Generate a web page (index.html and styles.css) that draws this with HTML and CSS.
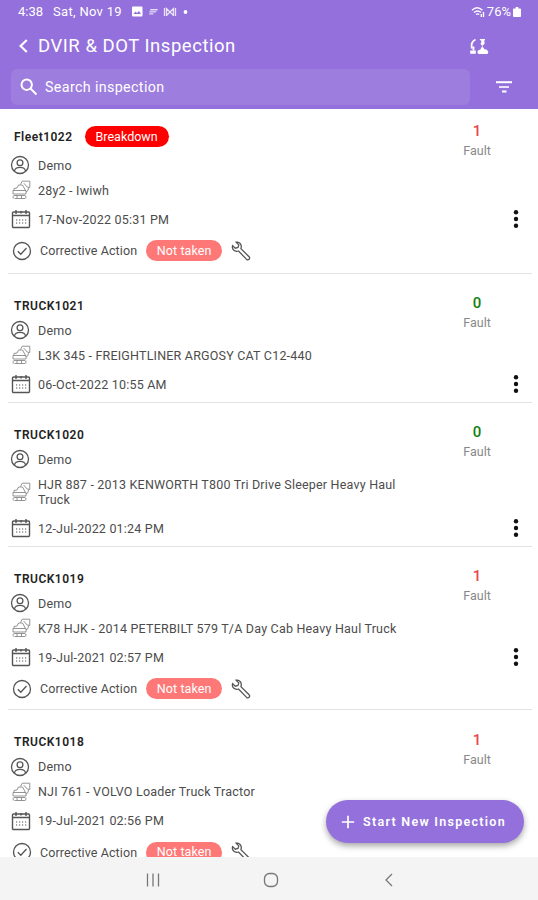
FILE: index.html
```html
<!DOCTYPE html>
<html lang="en">
  <head>
    <meta charset="UTF-8" />
    <meta name="viewport" content="width=device-width, initial-scale=1.0" />
    <title>DVIR &amp; DOT Inspection</title>
    <link rel="stylesheet" href="styles.css">
  </head>
  <body>
    <svg class="sprite" aria-hidden="true">
      <symbol id="user" viewBox="0 0 20 20">
        <circle cx="10" cy="10" r="8.500" />
        <circle cx="10" cy="7.800" r="2.900" />
        <path d="M4.500 15.800c.5-2.400 2.500-3.400 5.500-3.400s5 1 5.500 3.400" />
      </symbol>
      <symbol id="vehicle" viewBox="0 0 20 20">
        <path d="M9.500 4.500l1.700-3.300h7.600v6.300l-2.600-.5-3.400-3.800" />
        <path d="M3 10.500V8.500l3-.5 1.500-3h4l3 5.500M2 10.500h13v3.500H2zM17.500 7.500l-.5 3-2 1.500" />
        <path d="M3 15.500h11M3.500 18.500h10.500M2.200 15.500v3M14.800 15.500v3M6 15.500v3M10.500 15.500v3" />
      </symbol>
      <symbol id="calendar" viewBox="0 0 20 20">
        <rect x="1.500" y="3" width="17" height="15.500" rx="1" />
        <path d="M1.500 6.500h17M5 1v4M15 1v4M10 2v2.500" />
        <path stroke-width="1.200" d="M5 11h1.200M8 11h1.200M11 11h1.200M14 11h1.200M5 14h1.200M8 14h1.200M11 14h1.200M14 14h1.200" />
      </symbol>
      <symbol id="check" viewBox="0 0 20 20">
        <circle cx="10" cy="10" r="8.500" />
        <path d="M5.800 10.200l3 3 5.700-6.200" />
      </symbol>
      <symbol id="wrench" viewBox="0 0 20 20">
        <path d="M5.200 1.200l2.600 2.700-.8 2.600-2.700.7-2.700-2.600C.8 7 2.200 9.600 4.800 10.200c1 .3 2 .1 2.700-.2l8.300 8.600c1.600 1 3.700-.9 2.500-2.600L9.900 7.600C11.300 3.500 8.400.4 5.200 1.200z" />
      </symbol>
    </svg>

    <header class="app-header">
      <div class="status-bar">
        <span class="clock">4:38</span>
        <span class="date">Sat, Nov 19</span>
        <svg class="status-icons" viewBox="0 0 60 14">
          <path fill-rule="evenodd" d="M2 1.500h8.500q1 0 1 1v8q0 1-1 1H2q-1 0-1-1v-8q0-1 1-1zM2.500 9h7.500L8 6 6 8 4.500 6.500z" />
          <path d="M19.500 4h7.500l-.7 1.400h-7.500zM18.500 6.200h7l-.7 1.300h-6.500zM18.300 8.300h4v1.300h-4z" opacity=".75" />
          <path d="M33.500 3v8M35.500 11V3.500l3.500 3.500 3.500-3.500V11M35.500 10.500L39 7l3.500 3.500M44.500 3v8" fill="none" stroke="#fff" stroke-width="1.300" opacity=".8" />
          <circle cx="54.500" cy="7" r="1.900" />
        </svg>
        <span class="battery">
          <svg class="wifi" viewBox="0 0 14 12">
            <path d="M1 4.200q5-4.800 10.500 0M3 6.500q3.500-3 7 0M5 8.500q1.700-1.200 3.200 0M12.500 6v5M10.300 8v3" fill="none" stroke="#fff" stroke-width="1.400" />
          </svg>
          <span>76%</span>
          <svg class="cell" viewBox="0 0 9 11">
            <path d="M3 0h3v1.500h2q1 0 1 1V10q0 1-1 1H1q-1 0-1-1V2.500q0-1 1-1h2z" />
          </svg>
        </span>
      </div>
      <div class="title-bar">
        <svg class="back" viewBox="0 0 9 14"><path d="M7.800 1L1.600 7l6.200 6" /></svg>
        <h1>DVIR &amp; DOT Inspection</h1>
        <svg class="sync" viewBox="0 0 20 17">
          <path d="M6.500 1.500Q1.500 4 2.800 10.500M4.500 8.500v4" fill="none" stroke="#fff" stroke-width="1.800" />
          <path d="M1.200 12.500h5.600v3.300H1.200zM10.500 1h5.500v1.600h-1l.8 3-2.600 2.400L11.500 6l1-2.500zM9.500 16q-1.800-1-.8-3 1-1.500 2.500-1.300L13.200 8l2.300 3.300q2.800-.2 3.600 2.200.7 1.500-.8 2.500z" />
        </svg>
      </div>
      <div class="search-bar">
        <div class="search">
          <svg viewBox="0 0 18 18"><circle cx="6.700" cy="6.700" r="5.200" /><path d="M10.500 10.500l6 6" /></svg>
          <span>Search inspection</span>
        </div>
        <svg class="filter" viewBox="0 0 16 12">
          <path d="M0 1.200h16" /><path d="M3 6h10" opacity=".8" /><path d="M6 10.500h4.500" />
        </svg>
      </div>
    </header>

    <main class="list" id="inspection-list"></main>

    <button class="start">
      <svg viewBox="0 0 14 14"><path d="M7 .8v12.400M.8 7h12.400" /></svg>
      <span>Start New Inspection</span>
    </button>

    <nav class="nav-bar">
      <svg viewBox="0 0 16 16"><path d="M2.500 1.500v13M8 1.500v13M13.500 1.500v13" /></svg>
      <svg viewBox="0 0 16 16"><rect x="1.500" y="1.500" width="13" height="13" rx="5" /></svg>
      <svg viewBox="0 0 16 16"><path d="M11 2L5 8l6 6" /></svg>
    </nav>

    <script>
      const inspections = [
        {
          name: "Fleet1022",
          breakdown: true,
          vehicle: "28y2 - Iwiwh",
          date: "17-Nov-2022 05:31 PM",
          faults: 1,
        },
        {
          name: "TRUCK1021",
          vehicle: "L3K 345 - FREIGHTLINER ARGOSY CAT C12-440",
          date: "06-Oct-2022 10:55 AM",
          faults: 0,
        },
        {
          name: "TRUCK1020",
          vehicle: "HJR 887 - 2013 KENWORTH T800 Tri Drive Sleeper Heavy Haul Truck",
          date: "12-Jul-2022 01:24 PM",
          faults: 0,
        },
        {
          name: "TRUCK1019",
          vehicle: "K78 HJK - 2014 PETERBILT 579 T/A Day Cab Heavy Haul Truck",
          date: "19-Jul-2021 02:57 PM",
          faults: 1,
        },
        {
          name: "TRUCK1018",
          vehicle: "NJI 761 - VOLVO Loader Truck Tractor",
          date: "19-Jul-2021 02:56 PM",
          faults: 1,
        },
      ];

      function icon(name) {
        return `<svg class="icon ${name}"><use href="#${name}" /></svg>`;
      }

      function populateList() {
        const list = document.getElementById("inspection-list");
        inspections.forEach((item) => {
          const action = item.faults
            ? `<div class="row action">
                ${icon("check")}<span class="label">Corrective Action</span>
                <span class="badge pending">Not taken</span>${icon("wrench")}
              </div>`
            : "";
          list.innerHTML += `
            <article class="item ${item.breakdown ? "broken" : ""}">
              <div class="details">
                <div class="name">
                  <h2>${item.name}</h2>
                  ${item.breakdown ? '<span class="badge">Breakdown</span>' : ""}
                </div>
                <div class="row driver">${icon("user")}<span>Demo</span></div>
                <div class="row truck">${icon("vehicle")}<span>${item.vehicle}</span></div>
                <div class="row when">
                  ${icon("calendar")}<span>${item.date}</span>
                  <svg class="more" viewBox="0 0 6 18">
                    <circle cx="3" cy="2.300" r="2.200" /><circle cx="3" cy="9" r="2.200" /><circle cx="3" cy="15.700" r="2.200" />
                  </svg>
                </div>
                ${action}
              </div>
              <div class="faults ${item.faults ? "" : "none"}">
                <strong>${item.faults}</strong>
                <span>Fault</span>
              </div>
            </article>`;
        });
      }

      populateList();
    </script>
  </body>
</html>
```
FILE: styles.css
```css
* {
  box-sizing: border-box;
}
body {
  display: flex;
  flex-direction: column;
  height: 900px;
  margin: 0;
  overflow: hidden;
  background: #fff;
  color: #4c4c4c;
  font-family: Roboto, "Liberation Sans", sans-serif;
  font-size: 12.5px;
}
svg {
  display: block;
  flex: none;
}
.sprite {
  position: absolute;
  width: 0;
  height: 0;
}

/* header */
.app-header {
  flex: none;
  height: 109px;
  background: #9370db;
  color: #fff;
  fill: #fff;
}
.status-bar {
  display: flex;
  align-items: center;
  height: 23px;
  padding: 0 17px 0 18px;
  font-size: 13px;
}
.date {
  margin-left: 10px;
  letter-spacing: 0.3px;
}
.status-icons {
  width: 60px;
  height: 14px;
  margin-left: 9px;
}
.battery {
  display: flex;
  align-items: center;
  gap: 2px;
  margin-left: auto;
}
.wifi {
  width: 14px;
  height: 12px;
}
.cell {
  width: 8px;
  height: 10px;
}
.title-bar {
  display: flex;
  align-items: center;
  height: 46px;
  padding: 0 49px 0 19px;
}
.back {
  width: 9px;
  height: 14px;
  margin-right: 10px;
  fill: none;
  stroke: #fff;
  stroke-width: 2.2;
}
h1 {
  margin: 0;
  font-size: 18.5px;
  font-weight: 400;
  letter-spacing: 0.53px;
}
.sync {
  width: 20px;
  height: 17px;
  margin-left: auto;
}
.search-bar {
  display: flex;
  align-items: center;
  justify-content: space-between;
  height: 36px;
  padding: 0 26px 0 11px;
}
.search {
  display: flex;
  align-items: center;
  gap: 7px;
  width: 459px;
  height: 36px;
  padding-left: 9px;
  border-radius: 6px;
  background: #9d7ddd;
  font-size: 14.3px;
  letter-spacing: 0.35px;
}
.search svg {
  width: 18px;
  height: 18px;
  fill: none;
  stroke: #fff;
  stroke-width: 2;
}
.filter {
  width: 16px;
  height: 12px;
  stroke: #fff;
  stroke-width: 2;
}

/* inspections */
.list {
  flex: 1;
  min-height: 0;
  overflow: hidden;
}
.item {
  display: flex;
  margin: 0 6px 0 8px;
  padding: 20px 0 3px;
  border-bottom: 1px solid #e2e2e2;
}
.details {
  width: 424px;
}
.name {
  display: flex;
  align-items: center;
  gap: 12px;
  height: 24px;
  padding-left: 6px;
}
h2 {
  margin: 0;
  color: #222;
  font-size: 12px;
  font-weight: 600;
  letter-spacing: 0.5px;
}
.row {
  display: flex;
  align-items: center;
  padding-left: 3px;
  letter-spacing: 0.2px;
}
.driver {
  height: 25px;
}
.truck {
  padding-top: 5px;
  padding-bottom: 7px;
  padding-right: 30px;
  line-height: 15px;
}
.when {
  height: 29px;
}
.action {
  height: 34.5px;
}
.icon {
  width: 20px;
  height: 20px;
  margin: -3px 7px -3px 0;
  fill: none;
  stroke: #555;
  stroke-width: 1.3;
}
.user {
  margin-left: -1px;
  margin-right: 8px;
}
.vehicle {
  stroke: #888;
  stroke-width: 0.9;
}
.calendar {
  stroke-width: 1.4;
}
.check {
  margin-left: 1px;
  margin-right: 8px;
}
.wrench {
  margin: 0 0 0 9px;
}
.label {
  margin-right: 9px;
  letter-spacing: 0.1px;
}
.badge {
  display: flex;
  align-items: center;
  justify-content: center;
  width: 84px;
  height: 21px;
  padding-bottom: 1px;
  border-radius: 11px;
  background: #f00;
  color: #fff;
}
.pending {
  width: 76px;
  background: #ff7878;
  letter-spacing: 0.1px;
}
.more {
  position: absolute;
  right: 19px;
  width: 6px;
  height: 18px;
  fill: #111;
}
.faults {
  display: flex;
  flex-direction: column;
  align-items: center;
  width: 90px;
  padding-top: 1.5px;
  gap: 4px;
  color: #888;
  line-height: 16px;
}
.faults strong {
  color: #e8474c;
  font-size: 15px;
  font-weight: 500;
}
.faults.none strong {
  color: #118011;
}

.broken {
  padding-top: 12px;
  padding-bottom: 4.5px;
}
.broken .name {
  height: 31.5px;
}

.start {
  position: absolute;
  right: 14px;
  bottom: 57px;
  display: flex;
  align-items: center;
  gap: 8px;
  width: 198px;
  height: 43px;
  padding: 0 0 0 15px;
  border: 0;
  border-radius: 22px;
  background: #9370db;
  box-shadow: 0 3px 6px rgba(0, 0, 0, 0.35);
  color: #fff;
  font-family: inherit;
  font-size: 12.5px;
  font-weight: 600;
  letter-spacing: 1.28px;
  white-space: nowrap;
}
.start svg {
  width: 14px;
  height: 14px;
  stroke: #fff;
  stroke-width: 1.7;
}

.nav-bar {
  display: flex;
  align-items: center;
  justify-content: center;
  gap: 102px;
  flex: none;
  height: 43px;
  padding: 2px 0 0 3px;
  background: #f4f4f4;
}
.nav-bar svg {
  width: 16px;
  height: 16px;
  fill: none;
  stroke: #777;
  stroke-width: 1.3;
}
```
